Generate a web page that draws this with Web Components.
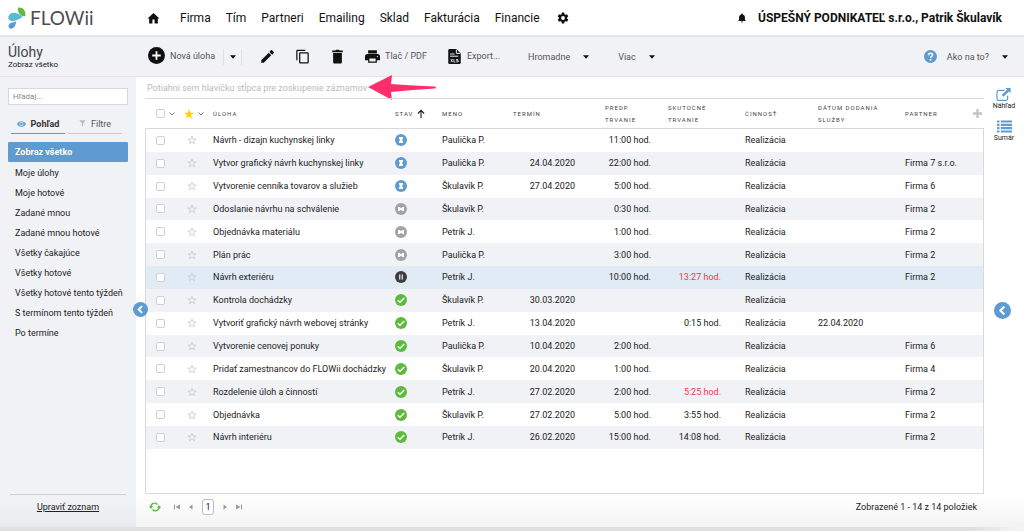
<!DOCTYPE html>
<html lang="sk">
<head>
<meta charset="utf-8">
<meta name="viewport" content="width=device-width, initial-scale=1">
<title>FLOWii – Úlohy</title>
<style>
  body { margin: 0; background: #fff; color: #222; font: 9px/12px Roboto, "Liberation Sans", sans-serif; }
</style>
</head>
<body>
<flow-app></flow-app>
<script>
const base = `*{box-sizing:border-box}
  button{font:inherit;color:inherit;background:none;border:0;padding:0;margin:0;display:inline-flex;align-items:center;cursor:pointer}
  a{color:inherit;text-decoration:none}`;

class FlowElement extends HTMLElement {
  connectedCallback() {
    if (this.shadowRoot) return;
    const t = document.createElement('template');
    t.innerHTML = `<style>${base}${this.css()}</style>${this.html()}`;
    this.attachShadow({ mode: 'open' }).append(t.content.cloneNode(true));
  }
  css() { return ':host{display:block}'; }
  html() { return '<slot></slot>'; }
}

const icons = {
  home: ['0 0 24 24', '<path d="M10 21v-7h4v7h6v-9h3L12 2 1 12h3v9z"/>'],
  gear: ['0 0 24 24', '<path fill-rule="evenodd" d="M20 13.2q.1-1.2 0-2.400l2.600-2-2.500-4.400-3.100 1.300-2.100-1.200L14.500 1h-5l-.400 3.500L7 5.700 3.900 4.400 1.400 8.800l2.600 2q-.1 1.200 0 2.400l-2.600 2 2.500 4.400L7 18.300l2.100 1.200.4 3.500h5l.4-3.500 2.100-1.200 3.100 1.300 2.500-4.400zM12 15.800a3.800 3.800 0 1 1 0-7.600 3.800 3.800 0 0 1 0 7.600z"/>'],
  bell: ['0 0 24 24', '<path d="M12 23a2.500 2.500 0 0 0 2.500-2.500h-5A2.500 2.500 0 0 0 12 23zm7-7v-5.500c0-3.500-2-6-5-6.800V3a2 2 0 0 0-4 0v.700C7 4.500 5 7 5 10.500V16l-2 2v1h18v-1z"/>'],
  add: ['0 0 24 24', '<circle cx="12" cy="12" r="12"/><path d="M12 6v12M6 12h12" stroke="#fff" stroke-width="2.600"/>'],
  caret: ['0 0 10 6', '<path d="M0 0h10L5 6z"/>'],
  pencil: ['0 0 24 24', '<path d="M2 18v4h4L18 10l-4-4zM22 6.500c.6-.6.6-1.200 0-1.800L19.300 2c-.6-.6-1.200-.6-1.800 0L15 4.600 19.400 9z"/>'],
  copy: ['0 0 24 24', '<path d="M16.500 1H4a2 2 0 0 0-2 2v15h2V3h12.500zM20 5H8.500a2 2 0 0 0-2 2v14a2 2 0 0 0 2 2H20a2 2 0 0 0 2-2V7a2 2 0 0 0-2-2zm0 16H8.500V7H20z"/>'],
  trash: ['0 0 24 24', '<path d="M5 6.500V21c0 1.200.8 2 2 2h10c1.200 0 2-.800 2-2V6.500zM20.500 2.500h-5L14 1h-4L8.500 2.500h-5V5h17z"/>'],
  print: ['0 0 24 24', '<path fill-rule="evenodd" d="M20 8H4a4 4 0 0 0-4 4v6h5v4h14v-4h5v-6a4 4 0 0 0-4-4zm-3 12H7v-5h10zM20 13a1 1 0 1 1 0-2 1 1 0 0 1 0 2zM19 2H5v5h14z"/>'],
  file: ['0 0 20 24', '<path d="M0 2C0 1 1 0 2 0h11l7 7v15c0 1-1 2-2 2H2c-1 0-2-1-2-2z"/><path d="M13 1v6h6M3 8h7M3 11.500h13" stroke="#fff" stroke-width="1.500" fill="none"/><path d="M4 16l3 5m0-5l-3 5m5-5v5h2.500m4.500-4.300h-3v2h3v2h-3" stroke="#fff" stroke-width="1.200" fill="none"/>'],
  help: ['0 0 24 24', '<circle cx="12" cy="12" r="12"/><path d="M8.300 9.500c0-5 7.500-4.700 7.500-.5 0 2.700-3.600 2.700-3.600 5.500" fill="none" stroke="#fff" stroke-width="2.800"/><circle cx="12.100" cy="18" r="1.700" fill="#fff"/>'],
  eye: ['0 0 24 16', '<path fill-rule="evenodd" d="M0 8C5-2 19-2 24 8 19 18 5 18 0 8zm12-5.500a5.500 5.500 0 1 0 0 11 5.500 5.500 0 0 0 0-11z"/><circle cx="12" cy="8" r="3.500"/>'],
  funnel: ['0 0 20 20', '<path d="M1 1h18l-7 8v10l-4-3V9z"/>'],
  chevron: ['0 0 12 8', '<path d="M1 1l5 5 5-5" fill="none" stroke="currentColor" stroke-width="2"/>'],
  star: ['0 0 24 24', '<path d="M12 0l3 8.800h9l-7.300 5.400L19.500 23 12 17.800 4.500 23l2.800-8.800L0 8.800h9z"/>'],
  staro: ['0 0 24 24', '<path d="M12 2.500l2.500 7.200h7.300l-5.900 4.400 2.200 7.100-6.100-4.300-6.100 4.300 2.200-7.100-5.900-4.400h7.300z" fill="none" stroke="currentColor" stroke-width="1.800"/>'],
  up: ['0 0 18 20', '<path d="M9 20V3M2 10l7-7 7 7" fill="none" stroke="currentColor" stroke-width="2.600"/>'],
  plus: ['0 0 10 10', '<path d="M5 0v10M0 5h10" stroke="currentColor" stroke-width="2.600"/>'],
  wait: ['0 0 24 24', '<circle cx="12" cy="12" r="12" fill="#5d9bd0"/><path d="M8 6h8v3l-2 3 2 3v3H8v-3l2-3-2-3z" fill="#fff"/>'],
  idle: ['0 0 24 24', '<circle cx="12" cy="12" r="12" fill="#a3a3a3"/><path d="M6 8h3l3 2.500L15 8h3v8h-3l-3-2.500L9 16H6z" fill="#fff"/>'],
  pause: ['0 0 24 24', '<circle cx="12" cy="12" r="12" fill="#3e3e40"/><path d="M9.500 7v10M14.500 7v10" stroke="#fff" stroke-width="2.200"/>'],
  done: ['0 0 24 24', '<circle cx="12" cy="12" r="12" fill="#5cba3c"/><path d="M5.500 12.500l4.500 4 8.500-8.500" stroke="#fff" stroke-width="3" fill="none"/>'],
  back: ['0 0 24 24', '<circle cx="12" cy="12" r="12"/><path d="M14.500 6.500L9 12l5.500 5.500" stroke="#fff" stroke-width="3" fill="none"/>'],
  open: ['0 0 24 22', '<path d="M14 4H4a3 3 0 0 0-3 3v11a3 3 0 0 0 3 3h12a3 3 0 0 0 3-3v-5" fill="none" stroke="currentColor" stroke-width="2"/><path d="M15 0h9v9l-3-3-9 9-3-3 9-9z"/>'],
  list: ['0 0 24 20', '<path d="M0 2h4M6 2h18M0 7.300h4M6 7.300h18M0 12.600h4M6 12.600h18M0 18h4M6 18h18" stroke="currentColor" stroke-width="3.400"/>'],
  refresh: ['0 0 24 20', '<path d="M3.500 10C4 2 13 0 17 5M20.500 10C20 18 11 20 7 15" fill="none" stroke="currentColor" stroke-width="2.800"/><path d="M0 8h8l-4 6zM24 12h-8l4-6z"/>'],
  first: ['0 0 12 12', '<path d="M0 1h2v10H0zM12 1v10L3 6z"/>'],
  prev: ['0 0 12 12', '<path d="M9 1v10L2 6z"/>'],
  next: ['0 0 12 12', '<path d="M3 1v10l7-5z"/>'],
  last: ['0 0 12 12', '<path d="M10 1h2v10h-2zM0 1v10l9-5z"/>'],
  drops: ['0 0 54 66', '<path d="M30 2c14-2 24 8 22 26C36 28 28 16 30 2z" fill="#62b946"/><path d="M2 26c6-12 24-13 42 3C30 40 8 48 2 36c-2-3-1-7 0-10z" fill="#56bcd2"/><path d="M24 43c0 13-6 22-16 22C0 64 0 54 5 50c5-4 13-3 19-7z" fill="#5a9bd2"/>'],
  arrow: ['0 0 68 25', '<path d="M0 12L24 0 23 9q22 1.500 44 2.500 2 1 0 2Q45 14.500 23 17l1 8z" fill="#ff2d6b"/>']
};

customElements.define('flow-icon', class extends FlowElement {
  css() { return `:host{display:inline-block;flex:none;width:var(--w,10px);height:var(--h,var(--w,10px))}
    svg{display:block;width:100%;height:100%;fill:currentColor}`; }
  html() { const [box, d] = icons[this.getAttribute('name')];
    return `<svg viewBox="${box}" aria-hidden="true">${d}</svg>`; }
});
const icon = (name, w, h = w) => `<flow-icon name="${name}" style="--w:${w}px;--h:${h}px"></flow-icon>`;

customElements.define('flow-topbar', class extends FlowElement {
  css() { return `:host{display:flex;align-items:center;height:37px;border-bottom:2px solid #e6e6e8;padding:1px 22px 0 8px;font-size:12px;line-height:16px;color:#111;background:#fff}
    .logo{display:flex;align-items:center;gap:4px;width:139px;font:19px/22px Lato,sans-serif;color:#4d4d4f}
    nav{display:flex;align-items:center;gap:15px;flex:1}
    nav a:first-child{margin-right:5px} nav a:last-child{margin-left:2px}
    nav a{display:flex}
    .user{display:flex;align-items:center;gap:11px;font-weight:700}`; }
  html() { return `<a class="logo" href="#">${icon('drops', 18, 22)}<span>FLOWii</span></a>
    <nav><a href="#" aria-label="Domov">${icon('home', 13)}</a>${['Firma','Tím','Partneri','Emailing','Sklad','Fakturácia','Financie'].map(t => `<a href="#">${t}</a>`).join('')}<a href="#" aria-label="Nastavenia">${icon('gear', 12)}</a></nav>
    <div class="user">${icon('bell', 10)}<a href="#"><slot></slot></a></div>`; }
});

customElements.define('tool-button', class extends FlowElement {
  css() { return `:host{display:block} button{gap:5px;height:20px;white-space:nowrap} flow-icon{color:#111}
    :host([tone=blue]) flow-icon:first-child{color:#5d9bd0;margin-right:-3px} :host([menu]) button{gap:13px}`; }
  html() { const i = this.getAttribute('icon'), s = this.getAttribute('size') || 15, l = this.getAttribute('label') || '';
    return `<button ${l ? `aria-label="${l}"` : ''}>${i ? icon(i, s) : ''}<slot></slot>${this.hasAttribute('menu') ? icon('caret', 6, 4) : ''}</button>`; }
});

customElements.define('flow-toolbar', class extends FlowElement {
  css() { return `:host{display:flex;align-items:center;height:40px;background:#f0f2f6;border-bottom:1px solid #ebe0e2;padding:0 16px 0 8px;color:#555}
    header{width:140px;color:#444}
    h1{font-size:14px;line-height:16px;font-weight:400;margin:0} p{font-size:8px;line-height:9px;margin:0;color:#222}
    .tools{display:flex;align-items:center;flex:1}
    .split{border:solid #dfe1e5;border-width:0 1px;height:16px;width:19px;margin:0 18px 0 8px;display:flex;align-items:center;justify-content:center}
    .split tool-button{width:6px;overflow:hidden}
    .g{display:flex;gap:20px;margin-right:20px} .m{display:flex;gap:29px;margin-left:28px} .x{margin-left:20px}`; }
  html() { return `<header><h1>Úlohy</h1><p>Zobraz všetko</p></header>
    <div class="tools"><tool-button icon="add" size="17">Nová úloha</tool-button>
    <span class="split"><tool-button menu label="Možnosti"></tool-button></span>
    <span class="g"><tool-button icon="pencil" label="Upraviť"></tool-button><tool-button icon="copy" label="Kopírovať"></tool-button><tool-button icon="trash" label="Zmazať"></tool-button></span>
    <tool-button icon="print">Tlač / PDF</tool-button>
    <tool-button class="x" icon="file" size="15">Export...</tool-button>
    <span class="m"><tool-button menu>Hromadne</tool-button><tool-button menu>Viac</tool-button></span></div>
    <tool-button menu icon="help" size="13" tone="blue">Ako na to?</tool-button>`; }
});

customElements.define('flow-sidebar', class extends FlowElement {
  css() { return `:host{display:flex;flex-direction:column;position:relative;width:136px;background:linear-gradient(#f0f2f6 94%,#e8eaed);padding:11px 8px 14px;flex:none}
    input{display:block;width:100%;height:17px;border:1px solid #d6d8dc;background:#fff;padding:0 4px;font:8px/12px Roboto,sans-serif;color:#333;outline:0;border-radius:0}
    input::placeholder{color:#888;opacity:1}
    .tabs{display:flex;gap:3px;margin:10px 6px 8px 3px}
    .tabs button{flex:1;height:19px;gap:5px;justify-content:center;border-bottom:1px solid #ccc;padding-bottom:1px;color:#555}
    .tabs button:first-child{font-weight:700;color:#333;border-color:#5d9bd0}
    .tabs flow-icon{color:#bbb} .tabs button:first-child flow-icon{color:#5d9bd0}
    ul{list-style:none;margin:0;padding:0;flex:1}
    li a{display:block;padding:4px 7px;line-height:12px;white-space:nowrap}
    li a.on{background:#5d9bd0;color:#fff;font-weight:700;border-radius:1px;margin-bottom:1px}
    .edit{border-top:1px solid #d0d1d4;margin:0 2px;padding-top:6px;text-align:center;text-decoration:underline}
    .fold{position:absolute;right:-12px;top:225px;color:#5d9bd0}`; }
  html() { const v = ['Zobraz všetko','Moje úlohy','Moje hotové','Zadané mnou','Zadané mnou hotové','Všetky čakajúce','Všetky hotové','Všetky hotové tento týždeň','S termínom tento týždeň','Po termíne'];
    return `<input type="text" placeholder="Hľadaj..." aria-label="Hľadaj">
    <div class="tabs"><button>${icon('eye', 9, 6)}Pohľad</button><button>${icon('funnel', 7)}Filtre</button></div>
    <ul>${v.map((t, i) => `<li><a href="#" class="${i ? '' : 'on'}">${t}</a></li>`).join('')}</ul>
    <a class="edit" href="#">Upraviť zoznam</a>
    <button class="fold" aria-label="Skryť panel">${icon('back', 15)}</button>`; }
});

const P = 'Paulička P.', S = 'Škulavík P.', J = 'Petrík J.';
const rows = [
  ['Návrh - dizajn kuchynskej linky','wait',P,'','11:00 hod.','','',''],
  ['Vytvor grafický návrh kuchynskej linky','wait',P,'24.04.2020','22:00 hod.','','','Firma 7 s.r.o.'],
  ['Vytvorenie cenníka tovarov a služieb','wait',S,'27.04.2020','5:00 hod.','','','Firma 6'],
  ['Odoslanie návrhu na schválenie','idle',S,'','0:30 hod.','','','Firma 2'],
  ['Objednávka materiálu','idle',J,'','1:00 hod.','','','Firma 2'],
  ['Plán prác','idle',P,'','3:00 hod.','','','Firma 2'],
  ['Návrh exteriéru','pause',J,'','10:00 hod.','!13:27 hod.','','Firma 2'],
  ['Kontrola dochádzky','done',S,'30.03.2020','','','',''],
  ['Vytvoriť grafický návrh webovej stránky','done',J,'13.04.2020','','0:15 hod.','22.04.2020',''],
  ['Vytvorenie cenovej ponuky','done',P,'10.04.2020','2:00 hod.','','','Firma 6'],
  ['Pridať zamestnancov do FLOWii dochádzky','done',S,'20.04.2020','1:00 hod.','','','Firma 4'],
  ['Rozdelenie úloh a činností','done',J,'27.02.2020','2:00 hod.','!5:25 hod.','','Firma 2'],
  ['Objednávka','done',S,'27.02.2020','5:00 hod.','3:55 hod.','','Firma 2'],
  ['Návrh interiéru','done',J,'26.02.2020','15:00 hod.','14:08 hod.','','Firma 2']
];

customElements.define('flow-grid', class extends FlowElement {
  css() { return `:host{display:flex;flex-direction:column;flex:1}
    table{width:100%;height:351px;border-collapse:separate;border-spacing:0;table-layout:fixed}
    th,td{padding:0 0 0 10px;text-align:left;white-space:nowrap;vertical-align:middle}
    th{height:31px;border:solid #d9d9db;border-width:1px 0;font-size:6px;line-height:12px;font-weight:400;letter-spacing:1px;color:#444}
    td:first-child{border-left:1px solid #d9d9db} td:last-child{border-right:1px solid #d9d9db}
    th:first-child{padding-left:11px}
    tbody tr:nth-child(even){background:#f0f2f6} tbody tr.sel{background:#e0ebf5}
    .h{display:flex;align-items:center;gap:4px} .h span{display:flex} .h.last{justify-content:space-between;padding-right:2px}
    .n{text-align:right} td.d{padding-right:20px} td.p{padding-right:7px} td.s{padding-right:14px}
    .late{color:#ee3a45}
    input{appearance:none;display:block;width:9px;height:9px;margin:0;border:1px solid #d0d0d4;border-radius:2px;background:#fff}
    td flow-icon{display:block} td.f{color:#c6c8cc} .gold{color:#ffcf00} .dim{color:#777} .pale{color:#c4c4c8} .dark{color:#222}
    .rest{flex:1;border:1px solid #d9d9db;border-top:0}`; }
  html() { const w = [32,26,'',47,71,92,63,77,73,87,89];
    const ic = (c, n, x, y) => `<span class="${c}">${icon(n, x, y)}</span>`;
    return `<table><colgroup>${w.map(x => `<col ${x ? `style="width:${x}px"` : ''}>`).join('')}</colgroup>
    <thead><tr><th><div class="h"><input type="checkbox" aria-label="Označiť všetko">${ic('dim','chevron',6,4)}</div></th>
    <th style="padding-left:7px"><div class="h">${ic('gold','star',10)}${ic('dim','chevron',6,4)}</div></th><th>ÚLOHA</th>
    <th><div class="h">STAV${ic('dark','up',8,9)}</div></th><th>MENO</th><th>TERMÍN</th><th>PREDP.<br>TRVANIE</th><th>SKUTOČNÉ<br>TRVANIE</th><th>ČINNOSŤ</th><th>DÁTUM DODANIA<br>SLUŽBY</th>
    <th><div class="h last">PARTNER${ic('pale','plus',9)}</div></th></tr></thead>
    <tbody>${rows.map(([t,s,m,d,p,k,x,f]) => `<tr class="${s === 'pause' ? 'sel' : ''}"><td><input type="checkbox" aria-label="${t}"></td><td class="f">${icon('staro', 10)}</td><td>${t}</td><td>${icon(s, 12)}</td><td>${m}</td><td class="n d">${d}</td><td class="n p">${p}</td><td class="n s ${k[0] === '!' ? 'late' : ''}">${k.replace('!','')}</td><td>Realizácia</td><td>${x}</td><td>${f}</td></tr>`).join('')}</tbody></table>
    <div class="rest"></div>`; }
});

customElements.define('flow-pager', class extends FlowElement {
  css() { return `:host{display:flex;align-items:center;justify-content:space-between;height:33px;padding:0 7px 8px 4px}
    div{display:flex;align-items:center;gap:8px;color:#999}
    .r{color:#5cba3c;margin-right:5px} .c{border:1px solid #bbb;border-radius:3px;width:12px;height:16px;justify-content:center;color:#222;background:#fff}`; }
  html() { return `<div><button class="r" aria-label="Obnoviť">${icon('refresh', 12, 10)}</button><button aria-label="Prvá">${icon('first', 6)}</button><button aria-label="Predošlá">${icon('prev', 6)}</button><button class="c">1</button><button aria-label="Ďalšia">${icon('next', 6)}</button><button aria-label="Posledná">${icon('last', 6)}</button></div><slot></slot>`; }
});

customElements.define('flow-rail', class extends FlowElement {
  css() { return `:host{display:flex;flex-direction:column;align-items:center;width:40px;padding:11px 0 0;flex:none;font-size:7px;line-height:10px}
    a{display:flex;flex-direction:column;align-items:center;margin-bottom:9px}
    flow-icon{color:#5d9bd0} button{margin:150px 4px 0 0}`; }
  html() { return `<a href="#">${icon('open', 15, 13)}Náhľad</a><a href="#">${icon('list', 15, 13)}Sumár</a><button aria-label="Zobraziť panel">${icon('back', 17)}</button>`; }
});

customElements.define('flow-app', class extends FlowElement {
  css() { return `:host{display:flex;flex-direction:column;min-height:100vh}
    .body{display:flex;flex:1}
    main{display:flex;flex-direction:column;flex:1;min-width:0;padding-left:9px}
    .group{display:flex;align-items:center;gap:1px;height:21px;padding-left:2px;color:#bbb}
    .page{display:flex;flex:1;background:linear-gradient(#fff 93%,#f3f3f4)}
    footer{height:4px;background:linear-gradient(90deg,#dfe0e4 95%,#f6f6f7)}`; }
  html() { return `<flow-topbar>ÚSPEŠNÝ PODNIKATEĽ s.r.o., Patrik Škulavík</flow-topbar><flow-toolbar></flow-toolbar>
    <div class="body"><flow-sidebar></flow-sidebar><div class="page"><main><div class="group"><span>Potiahni sem hlavičku stĺpca pre zoskupenie záznamov</span>${icon('arrow', 68, 25)}</div>
    <flow-grid></flow-grid><flow-pager>Zobrazené 1 - 14 z 14 položiek</flow-pager></main><flow-rail></flow-rail></div></div><footer></footer>`; }
});
</script>
</body>
</html>
